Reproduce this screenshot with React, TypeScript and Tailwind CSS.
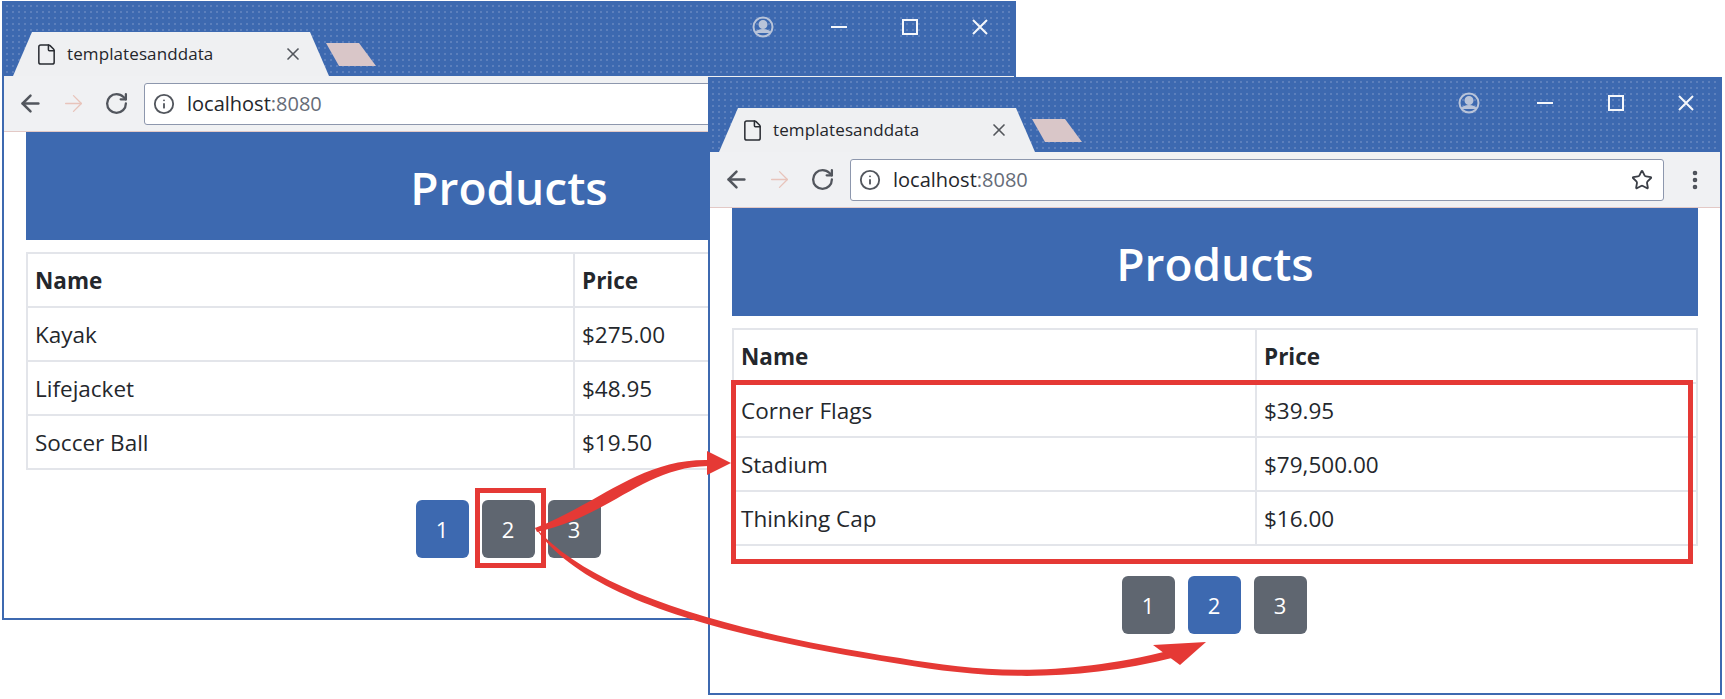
import { ArrowLeft, ArrowRight, RotateCw, Info, Star, EllipsisVertical, File, X } from "lucide-react";

const ui = "font-['Open_Sans','Noto_Sans',sans-serif]";

function Profile() {
  return (
    <svg width="22" height="22" viewBox="0 0 22 22" fill="none" stroke="#b9c4d9" strokeWidth="2">
      <circle cx="11" cy="11" r="9.5" />
      <circle cx="11" cy="8.5" r="3.5" fill="#b9c4d9" />
      <path d="M4 17c2-4 12-4 14 0" fill="#b9c4d9" />
    </svg>
  );
}

function Caption() {
  return (
    <div className="ml-auto flex self-start items-center h-[48px] pr-[26px] text-white">
      <div className="mr-[57px]"><Profile /></div>
      <svg className="mr-[55px]" width="16" height="16" viewBox="0 0 16 16" stroke="#f5f7fb" strokeWidth="2"><path d="M0 8h16" /></svg>
      <svg className="mr-[54px]" width="16" height="16" viewBox="0 0 16 16" fill="none" stroke="#f5f7fb" strokeWidth="2"><rect x="1" y="1" width="14" height="14" /></svg>
      <svg width="16" height="16" viewBox="0 0 16 16" stroke="#f5f7fb" strokeWidth="2"><path d="M1 1l14 14M15 1L1 15" /></svg>
    </div>
  );
}

function Tab() {
  return (
    <div className="flex items-end h-full">
      <div className="ml-[9px] w-[316px] h-[44px] bg-[#eff0f2] [clip-path:polygon(0_100%,19px_0,297px_0,316px_100%)] flex items-center pl-[22px] pr-[26px]">
        <File size={23} strokeWidth={1.6} className="text-[#2a2d33] shrink-0" />
        <span className={`ml-[9px] text-[17px] tracking-[0.1px] text-[#24262b] ${ui}`}>templatesanddata</span>
        <X size={20} strokeWidth={2} className="ml-auto text-[#53565c]" />
      </div>
      <div className="ml-[-3px] mb-[10px] w-[50px] h-[23px] bg-[#d9c6c8] [clip-path:polygon(0_0,33px_0,50px_100%,13px_100%)]" />
    </div>
  );
}

function Toolbar() {
  return (
    <div className="h-[56px] bg-[#f0f1f3] border-b border-[#e3c9c6] flex items-center pl-[13px] pr-[10px] shrink-0">
      <ArrowLeft size={27} strokeWidth={2.2} className="text-[#52565d]" />
      <ArrowRight size={27} strokeWidth={1.2} className="ml-[16px] text-[#e8c4bb]" />
      <RotateCw size={25} strokeWidth={2.2} className="ml-[17px] text-[#52565d]" />
      <div className="ml-[15px] h-[42px] w-[814px] bg-white rounded-[3px] border border-[#8d97ad] flex items-center pl-[8px] pr-[10px]">
        <Info size={22} strokeWidth={2} className="text-[#52565d]" />
        <span className={`ml-[12px] text-[20px] text-[#24262b] ${ui}`}>localhost<span className="text-[#666c78]">:8080</span></span>
        <Star size={22} strokeWidth={2} className="ml-auto text-[#3a3e46]" />
      </div>
      <EllipsisVertical size={24} strokeWidth={2.6} className="ml-auto mr-[3px] text-[#4b4f57]" />
    </div>
  );
}

type Row = [string, string];

function Table({ rows, nameWidth }: { rows: Row[]; nameWidth: string }) {
  const cell = "h-[54px] px-[7px] pt-[2px] border-2 border-[#e3e5ea] text-left align-middle";
  return (
    <table className={`w-full mt-[12px] border-collapse text-[22.5px] text-[#24272c] ${ui}`}>
      <thead>
        <tr className="font-bold">
          <th className={`${cell} font-bold ${nameWidth}`}>Name</th>
          <th className={`${cell} font-bold`}>Price</th>
        </tr>
      </thead>
      <tbody>
        {rows.map(([n, p]) => (
          <tr key={n}>
            <td className={cell}>{n}</td>
            <td className={cell}>{p}</td>
          </tr>
        ))}
      </tbody>
    </table>
  );
}

function Pager({ active }: { active: number }) {
  return (
    <div className="flex justify-center gap-[13px] mt-[30px] pr-[2px]">
      {[1, 2, 3].map((n) => (
        <div
          key={n}
          className={`h-[58px] w-[53px] rounded-[6px] flex items-center justify-center text-white text-[22px] ${ui} ${n === active ? "bg-[#3d69b0]" : "bg-[#5f6670]"}`}
        >
          {n}
        </div>
      ))}
    </div>
  );
}

function BrowserWindow({ rows, active, nameWidth, className }: { rows: Row[]; active: number; nameWidth: string; className: string }) {
  return (
    <div className={`absolute w-[1014px] bg-white border-2 border-[#3d69b0] flex flex-col ${className}`}>
      <div className="h-[73px] shrink-0 bg-[#3d69b0] bg-[radial-gradient(#7f9ac9_0.6px,transparent_0.8px)] bg-[length:6px_6px] flex">
        <Tab />
        <Caption />
      </div>
      <Toolbar />
      <div className="flex-1 px-[22px]">
        <div className={`h-[108px] pt-[2px] bg-[#3d69b0] flex items-center justify-center text-white text-[46px] font-semibold ${ui}`}>Products</div>
        <Table rows={rows} nameWidth={nameWidth} />
        <Pager active={active} />
      </div>
    </div>
  );
}

function Annotations() {
  return (
    <svg className="absolute left-0 top-0" width="1725" height="699" viewBox="0 0 1725 699" fill="#e53935">
      <path d="M535 528C600 503 640 459 708 460L708 466C644 467 610 516 537 532Z" />
      <path d="M707 451L731 463L707 475Z" />
      <path d="M535 527C590 590 720 630 900 658C980 672 1060 678 1172 650L1176 657C1070 684 980 678 900 664C720 636 580 597 535 527Z" />
      <path d="M1206 642L1153 645L1180 665Z" />
    </svg>
  );
}

export default function App() {
  return (
    <div className="relative w-[1725px] h-[699px] bg-white overflow-hidden">
      <BrowserWindow
        className="left-[2px] top-[1px] h-[619px]"
        active={1}
        nameWidth="w-[547px]"
        rows={[["Kayak", "$275.00"], ["Lifejacket", "$48.95"], ["Soccer Ball", "$19.50"]]}
      />
      <div className="absolute left-[475px] top-[488px] w-[71px] h-[80px] border-[5px] border-[#e53935]" />
      <BrowserWindow
        className="left-[708px] top-[77px] h-[618px]"
        active={2}
        nameWidth="w-[523px]"
        rows={[["Corner Flags", "$39.95"], ["Stadium", "$79,500.00"], ["Thinking Cap", "$16.00"]]}
      />
      <div className="absolute left-[731px] top-[380px] w-[962px] h-[184px] border-[5px] border-[#e53935]" />
      <Annotations />
    </div>
  );
}
